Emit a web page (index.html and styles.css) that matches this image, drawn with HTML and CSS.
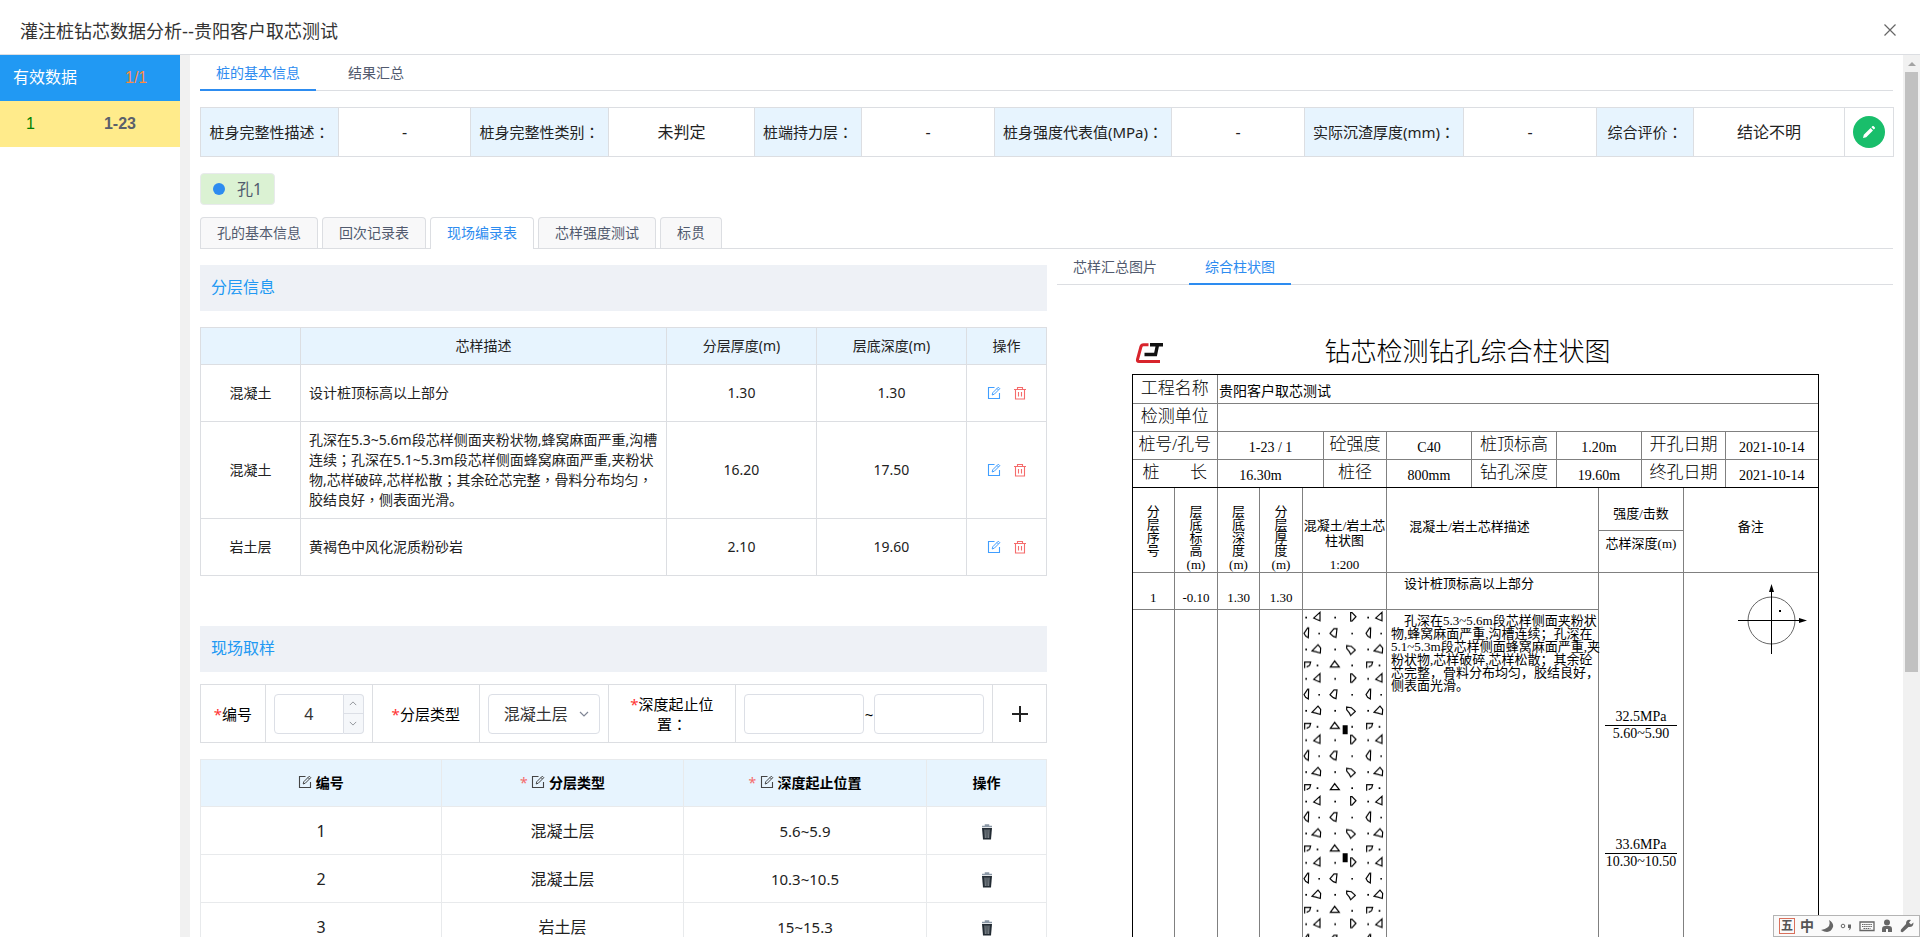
FILE: index.html
```html
<!DOCTYPE html>
<html lang="zh-CN">
<head>
  <meta charset="UTF-8">
  <meta name="viewport" content="width=device-width, initial-scale=1.0">
  <title>灌注桩钻芯数据分析</title>
  <link rel="stylesheet" href="styles.css">
</head>
<body>
  <!-- Shared icons -->
  <svg class="sprite" aria-hidden="true">
    <symbol id="i-edit" viewBox="0 0 14 14">
      <path d="M7.5 1.5H1.5v11h11V7" fill="none" stroke="currentColor" stroke-width="1.1"/>
      <path d="M5.2 9l.6-2.3L11.3 1.2l1.5 1.5-5.500 5.500zM10 2.500l1.500 1.500" fill="none" stroke="currentColor" stroke-width="1"/>
    </symbol>
    <symbol id="i-delete" viewBox="0 0 14 14">
      <path d="M1 3.500h12M4.500 3.500v-2h5v2M2.500 3.500v9.500h9V3.500M5.500 6v4.500M8.500 6v4.500" fill="none" stroke="currentColor" stroke-width="1.1"/>
    </symbol>
    <symbol id="i-trash" viewBox="0 0 12 16">
      <path d="M1 2.500h10M4.500 2V1h3v1" fill="none" stroke="#8a97a5" stroke-width="1.500"/>
      <path d="M1 4h10l-1 11.500H2z" fill="#222b33"/>
      <path d="M4 5.500l.3 8.500M6 5.500V14M8 5.500L7.700 14" stroke="#a9b0b5" stroke-width=".8"/>
    </symbol>
    <symbol id="i-up" viewBox="0 0 10 6"><path d="M1 5l4-4 4 4" fill="none" stroke="currentColor" stroke-width="1.2"/></symbol>
    <symbol id="i-down" viewBox="0 0 10 6"><path d="M1 1l4 4 4-4" fill="none" stroke="currentColor" stroke-width="1.2"/></symbol>
  </svg>

  <header class="header">
    <h1>灌注桩钻芯数据分析--贵阳客户取芯测试</h1>
    <button class="close" aria-label="关闭">
      <svg width="12" height="12" viewBox="0 0 12 12"><path d="M.5.5l11 11M11.500.5l-11 11" stroke="#666" stroke-width="1.2"/></svg>
    </button>
  </header>

  <div class="layout">
    <aside class="sidebar">
      <div class="side-head"><span>有效数据</span><span class="count">1/1</span></div>
      <div class="side-item"><span class="idx">1</span><span class="name">1-23</span></div>
    </aside>

    <main class="main">
      <nav class="tabs">
        <button class="tab active">桩的基本信息</button>
        <button class="tab">结果汇总</button>
      </nav>

      <table class="summary">
        <colgroup>
          <col style="width:138px"><col style="width:132px"><col style="width:138px"><col style="width:146px">
          <col style="width:107px"><col style="width:133px"><col style="width:177px"><col style="width:133px">
          <col style="width:159px"><col style="width:133px"><col style="width:97px"><col style="width:151px">
          <col style="width:49px">
        </colgroup>
        <tr>
          <th>桩身完整性描述<span class="mid" lang="zh-TW">：</span></th><td>-</td>
          <th>桩身完整性类别<span class="mid" lang="zh-TW">：</span></th><td>未判定</td>
          <th>桩端持力层<span class="mid" lang="zh-TW">：</span></th><td>-</td>
          <th>桩身强度代表值(MPa)<span class="mid" lang="zh-TW">：</span></th><td>-</td>
          <th>实际沉渣厚度(mm)<span class="mid" lang="zh-TW">：</span></th><td>-</td>
          <th>综合评价<span class="mid" lang="zh-TW">：</span></th><td>结论不明</td>
          <td>
            <button class="round" aria-label="编辑">
              <svg width="14" height="14" viewBox="0 0 14 14"><path d="M1 13l.8-3.200L8.600 3l2.400 2.400-6.800 6.800zM9.400 2.200l1.100-1.100q.5-.4 1 0l1.400 1.400q.4.5 0 1l-1.100 1.100z" fill="#fff"/></svg>
            </button>
          </td>
        </tr>
      </table>

      <button class="hole"><i class="dot"></i>孔1</button>

      <nav class="cards">
        <button class="card">孔的基本信息</button>
        <button class="card">回次记录表</button>
        <button class="card active">现场编录表</button>
        <button class="card">芯样强度测试</button>
        <button class="card">标贯</button>
      </nav>

      <div class="columns">
        <section class="left">
          <h2 class="bar">分层信息</h2>
          <table class="layers">
            <colgroup><col style="width:100px"><col><col style="width:150px"><col style="width:150px"><col style="width:80px"></colgroup>
            <tr class="head"><th></th><th>芯样描述</th><th>分层厚度(m)</th><th>层底深度(m)</th><th>操作</th></tr>
            <tr>
              <td>混凝土</td><td class="desc">设计桩顶标高以上部分</td><td>1.30</td><td>1.30</td>
              <td><div class="ops">
                <button class="blue" aria-label="编辑"><svg><use href="#i-edit"/></svg></button>
                <button class="red" aria-label="删除"><svg><use href="#i-delete"/></svg></button>
              </div></td>
            </tr>
            <tr class="tall">
              <td>混凝土</td>
              <td class="desc">孔深在5.3~5.6m段芯样侧面夹粉状物,蜂窝麻面严重,沟槽连续<span class="mid" lang="zh-TW">；</span>孔深在5.1~5.3m段芯样侧面蜂窝麻面严重,夹粉状物,芯样破碎,芯样松散<span class="mid" lang="zh-TW">；</span>其余砼芯完整<span class="mid" lang="zh-TW">，</span>骨料分布均匀<span class="mid" lang="zh-TW">，</span>胶结良好<span class="mid" lang="zh-TW">，</span>侧表面光滑。</td>
              <td>16.20</td><td>17.50</td>
              <td><div class="ops">
                <button class="blue" aria-label="编辑"><svg><use href="#i-edit"/></svg></button>
                <button class="red" aria-label="删除"><svg><use href="#i-delete"/></svg></button>
              </div></td>
            </tr>
            <tr>
              <td>岩土层</td><td class="desc">黄褐色中风化泥质粉砂岩</td><td>2.10</td><td>19.60</td>
              <td><div class="ops">
                <button class="blue" aria-label="编辑"><svg><use href="#i-edit"/></svg></button>
                <button class="red" aria-label="删除"><svg><use href="#i-delete"/></svg></button>
              </div></td>
            </tr>
          </table>

          <h2 class="bar second">现场取样</h2>
          <form class="sample-form">
            <label class="cell" for="no" style="flex-basis:64px"><span><b>*</b>编号</span></label>
            <div class="cell" style="flex-basis:107px">
              <div class="number">
                <input id="no" type="number" value="4">
                <div class="steps">
                  <button type="button" aria-label="增加"><svg><use href="#i-up"/></svg></button>
                  <button type="button" aria-label="减少"><svg><use href="#i-down"/></svg></button>
                </div>
              </div>
            </div>
            <label class="cell" for="type" style="flex-basis:107px"><span><b>*</b>分层类型</span></label>
            <div class="cell" style="flex-basis:129px">
              <div class="select">
                <select id="type"><option>混凝土层</option><option>岩土层</option></select>
                <svg><use href="#i-down"/></svg>
              </div>
            </div>
            <label class="cell wrap" for="from" style="flex-basis:128px"><span><b>*</b>深度起止位置<i class="mid" lang="zh-TW">：</i></span></label>
            <div class="cell range" style="flex-basis:257px">
              <input id="from" class="from" type="text"><span>~</span><input class="to" type="text" aria-label="终止位置">
            </div>
            <div class="cell" style="flex-basis:54px">
              <button class="add" type="button" aria-label="添加">
                <svg width="16" height="16" viewBox="0 0 16 16"><path d="M8 0v16M0 8h16" stroke="#222" stroke-width="2"/></svg>
              </button>
            </div>
          </form>

          <table class="samples">
            <colgroup><col style="width:241px"><col style="width:242px"><col style="width:243px"><col style="width:120px"></colgroup>
            <tr>
              <th><svg><use href="#i-edit"/></svg> 编号</th>
              <th><b>*</b> <svg><use href="#i-edit"/></svg> 分层类型</th>
              <th><b>*</b> <svg><use href="#i-edit"/></svg> 深度起止位置</th>
              <th>操作</th>
            </tr>
            <tr><td>1</td><td>混凝土层</td><td class="depth">5.6~5.9</td><td><button class="bin" aria-label="删除"><svg><use href="#i-trash"/></svg></button></td></tr>
            <tr><td>2</td><td>混凝土层</td><td class="depth">10.3~10.5</td><td><button class="bin" aria-label="删除"><svg><use href="#i-trash"/></svg></button></td></tr>
            <tr><td>3</td><td>岩土层</td><td class="depth">15~15.3</td><td><button class="bin" aria-label="删除"><svg><use href="#i-trash"/></svg></button></td></tr>
          </table>
        </section>

        <section class="right">
          <nav class="tabs">
            <button class="tab">芯样汇总图片</button>
            <button class="tab active">综合柱状图</button>
          </nav>

          <div class="sheet">
            <div class="sheet-title">
              <svg width="28" height="20" viewBox="0 0 28 20">
                <path d="M13.500 1.700H8.500Q6.500 1.700 6 3.500L2.500 16.500Q2 18.500 4 18.500H25" fill="none" stroke="#d8242c" stroke-width="3"/>
                <path d="M15 1.700H28M22.500 2L20.500 11.500H9.500" fill="none" stroke="#111" stroke-width="3.400"/>
              </svg>
              <h3>钻芯检测钻孔综合柱状图</h3>
            </div>
            <div class="frame">
              <table class="info">
                <colgroup><col style="width:85px"><col style="width:106px"><col style="width:63px"><col style="width:85px"><col style="width:85px"><col style="width:85px"><col style="width:84px"><col></colgroup>
                <tr><th>工程名称</th><td colspan="7" class="project">贵阳客户取芯测试</td></tr>
                <tr><th>检测单位</th><td colspan="7"></td></tr>
                <tr><th>桩号/孔号</th><td>1-23 / 1</td><th>砼强度</th><td>C40</td><th>桩顶标高</th><td>1.20m</td><th>开孔日期</th><td>2021-10-14</td></tr>
                <tr><th><div class="spread"><span>桩</span><span>长</span></div></th><td class="len">16.30m</td><th>桩径</th><td>800mm</td><th>钻孔深度</th><td>19.60m</td><th>终孔日期</th><td>2021-10-14</td></tr>
              </table>
            </div>
            <div class="frame lower-frame">
              <table class="log">
                <colgroup><col style="width:42px"><col style="width:43px"><col style="width:42px"><col style="width:43px"><col style="width:84px"><col style="width:212px"><col style="width:85px"><col></colgroup>
                <tr class="log-head">
                  <th><div class="vert">分层序号</div><div class="unit"></div></th>
                  <th><div class="vert">层底标高</div><div class="unit">(m)</div></th>
                  <th><div class="vert">层底深度</div><div class="unit">(m)</div></th>
                  <th><div class="vert">分层厚度</div><div class="unit">(m)</div></th>
                  <th><div class="pic">混凝土/岩土芯<br>柱状图</div><div class="unit">1:200</div></th>
                  <th class="mark">混凝土/岩土芯样描述</th>
                  <th><div class="hit">强度/击数</div><div class="at">芯样深度(m)</div></th>
                  <th class="note">备注</th>
                </tr>
                <tr class="first">
                  <td>1</td><td>-0.10</td><td>1.30</td><td>1.30</td><td></td><td class="text indent">设计桩顶标高以上部分</td>
                  <td rowspan="2" class="strength">
                    <div class="press"><div>32.5MPa</div><div class="lower">5.60~5.90</div></div>
                    <div class="press"><div>33.6MPa</div><div class="lower">10.30~10.50</div></div>
                  </td>
                  <td rowspan="2" class="compass">
                    <svg width="70" height="70" viewBox="0 0 70 70">
                      <circle cx="33.500" cy="36.500" r="23.500" fill="none" stroke="#666"/>
                      <path d="M33.500 6v64M0 36.500h64" stroke="#000"/>
                      <path d="M33.500 0l2.500 8h-5zM69 36.500l-8 2.500v-5z"/>
                      <rect x="41" y="26" width="2" height="2"/>
                    </svg>
                  </td>
                </tr>
                <tr>
                  <td></td><td></td><td></td><td></td>
                  <td class="core">
                    <svg width="83" height="400" viewBox="0 0 249 1200">
                      <defs>
                        <!-- Concrete aggregate hatch -->
                        <pattern id="agg" width="186" height="184" patternUnits="userSpaceOnUse">
                          <g fill="none" stroke="#000" stroke-width="3.500">
                            <path d="M32 24L51 7V32L41 28zM143 8h4l12 12-12 13h-4zM3 70L14 54h3L16 83 8 78zM81 70L93 56h9l-3 26-8-3zM27 123L45 104l8 10-1 15-14-4zM131 107l14 2 12 11-14 13-4-8-8-10z"/>
                            <path d="M5 174v-18h18l-3 10-9 5M82 171l13-18 14 18z"/>
                          </g>
                          <path d="M7 20h5v5H7zM94 20h5v5h-5zM46 68h5v5h-5zM145 68h5v5h-5zM7 116h5v5H7zM94 116h5v5h-5zM41 164h5v5h-5zM145 164h5v5h-5z"/>
                        </pattern>
                      </defs>
                      <rect width="249" height="1200" fill="url(#agg)"/>
                      <path d="M119 346h15v27h-15zM119 730h15v27h-15z"/>
                    </svg>
                  </td>
                  <td class="text long"><span class="gap"></span>孔深在5.3~5.6m段芯样侧面夹粉状<br>物,蜂窝麻面严重,沟槽连续；孔深在<br>5.1~5.3m段芯样侧面蜂窝麻面严重,夹<br>粉状物,芯样破碎,芯样松散；其余砼<br>芯完整，骨料分布均匀，胶结良好，<br>侧表面光滑。</td>
                </tr>
              </table>
            </div>
          </div>
        </section>
      </div>
    </main>

    <div class="scrollbar"><i class="arrow"></i><i class="thumb"></i></div>
  </div>

  <!-- Input method bar -->
  <div class="ime">
    <span class="wu">五</span>
    <span class="zh">中</span>
    <svg viewBox="0 0 16 16"><path d="M10 2q3 8-8 10 9 5 12-3 1-4-4-7z"/></svg>
    <svg viewBox="0 0 16 16"><circle cx="4" cy="8" r="1.800" fill="none" stroke="#666"/><path d="M9 6.500h3v3q0 2-2.500 3 1-1.500 1-2.500H9z"/></svg>
    <svg viewBox="0 0 16 16"><path d="M1 4h14v8.500H1z" fill="none" stroke="#666" stroke-width="1.300"/><path d="M3 6.500h10M3 8.500h10M4.500 10.500h7" stroke="#666" stroke-dasharray="1.500 .6"/></svg>
    <svg viewBox="0 0 16 16"><circle cx="8" cy="4.500" r="3"/><path d="M3 14v-3q0-3 3-3h4q3 0 3 3v3H9V11H7v3z"/></svg>
    <svg viewBox="0 0 16 16"><path d="M14.500 4.500L12 6.500 10 4.500l2-2.500q-5-1-5 4L2 11.500q-1 2 .5 2.500 1 .5 2-.5L9.500 9q5 .5 5-4.500z"/></svg>
  </div>
</body>
</html>
```

FILE: styles.css
```css
* {
  box-sizing: border-box;
}

body {
  margin: 0;
  height: 100vh;
  display: flex;
  flex-direction: column;
  overflow: hidden;
  background: #fff;
  color: #222;
  font-family: "Noto Sans", "Noto Sans CJK SC", sans-serif;
  font-size: 14px;
  line-height: 20px;
}

button,
input,
select {
  font: inherit;
  color: inherit;
}

button {
  padding: 0;
  border: 0;
  background: none;
  cursor: pointer;
}

h1, h2, h3 {
  margin: 0;
  font-weight: normal;
}

table {
  width: 100%;
  border-collapse: collapse;
  table-layout: fixed;
}

th {
  font-weight: normal;
}

th, td {
  padding: 0;
  text-align: center;
}

i {
  font-style: normal;
}

.sprite {
  display: none;
}

/* Punctuation set in the middle of its square */
.mid {
  font-family: "Noto Sans", "Noto Sans CJK TC", sans-serif;
}

/* Header */
.header {
  flex: none;
  height: 55px;
  padding: 5px 24px 0 20px;
  display: flex;
  align-items: center;
  justify-content: space-between;
  border-bottom: 1px solid #dcdee2;
}

.header h1 {
  padding-top: 4px;
  font-family: "Liberation Sans", "Noto Sans CJK SC", sans-serif;
  font-size: 18px;
  line-height: 24px;
  color: #333;
}

.close svg {
  display: block;
}

.layout {
  flex: 1;
  min-height: 0;
  display: flex;
}

/* Sidebar */
.sidebar {
  flex: none;
  width: 190px;
  border-right: 10px solid #f1f1f1;
  font-family: "Liberation Sans", "Noto Sans CJK SC", sans-serif;
  font-size: 16px;
}

.side-head,
.side-item {
  height: 46px;
  display: flex;
  align-items: center;
}

.side-head {
  padding-left: 13px;
  gap: 48px;
  background: #2199f3;
  color: #fff;
}

.count {
  color: #ff8a3c;
}

.side-item {
  padding-left: 26px;
  gap: 69px;
  background: #ffeb8b;
}

.idx {
  color: green;
}

.name {
  font-weight: bold;
  color: #5a5f6b;
}

.main {
  flex: 1;
  min-width: 0;
  padding: 0 10px;
  overflow: hidden;
}

/* Line tabs */
.tabs {
  height: 36px;
  display: flex;
  gap: 16px;
  border-bottom: 1px solid #dcdee2;
}

.tab {
  height: 36px;
  padding: 2px 16px 0;
  color: #515a6e;
  border-bottom: 2px solid transparent;
}

.tab.active {
  color: #2d8cf0;
  border-bottom-color: #2d8cf0;
}

/* Summary row */
.summary {
  margin-top: 16px;
  font-size: 16px;
}

.summary tr {
  height: 49px;
}

.summary th,
.summary td {
  border: 1px solid #dcdee2;
  white-space: nowrap;
}

.summary th {
  background: #e7f4fe;
  font-size: 15px;
}

.round {
  width: 32px;
  height: 32px;
  border-radius: 50%;
  background: #19be6b;
  vertical-align: middle;
}

.round svg {
  display: block;
  margin: 0 auto;
}

.hole {
  margin: 16px 0 12px;
  height: 32px;
  padding: 0 12px;
  display: flex;
  align-items: center;
  gap: 12px;
  border: 1px solid #e8eaec;
  border-radius: 4px;
  background: #dbf2d3;
  color: #515a6e;
  font-size: 16px;
}

.dot {
  width: 12px;
  height: 12px;
  border-radius: 50%;
  background: #2d8cf0;
}

/* Card tabs */
.cards {
  height: 32px;
  display: flex;
  gap: 4px;
  border-bottom: 1px solid #dcdee2;
}

.card {
  height: 31px;
  padding: 0 16px;
  border: 1px solid #dcdee2;
  border-bottom: 0;
  border-radius: 4px 4px 0 0;
  background: #f8f8f9;
  color: #515a6e;
}

.card.active {
  height: 32px;
  padding-bottom: 2px;
  background: #fff;
  color: #2d8cf0;
}

.columns {
  display: flex;
  align-items: flex-start;
  gap: 10px;
}

.left {
  flex: 0 0 50%;
  padding-top: 16px;
}

.right {
  flex: 1;
  min-width: 0;
}

.bar {
  height: 46px;
  padding-left: 11px;
  margin-bottom: 16px;
  background: #eef1f6;
  color: #2199f3;
  font-size: 16px;
  line-height: 44px;
}

.bar.second {
  margin: 50px 0 12px;
}

/* Layer table */
.layers tr {
  height: 57px;
}

.layers .head {
  height: 37px;
}

.layers .tall {
  height: 97px;
}

.layers th,
.layers td {
  border: 1px solid #dcdee2;
}

.layers th {
  background: #e7f4fe;
}

.layers .desc {
  padding: 0 8px;
  text-align: left;
}

.ops {
  display: flex;
  justify-content: center;
  gap: 12px;
}

.ops svg {
  display: block;
  width: 14px;
  height: 14px;
}

.blue {
  color: #409eff;
}

.red {
  color: #f56c6c;
}

/* Sample form */
.sample-form {
  height: 59px;
  display: flex;
  border: 1px solid #dcdee2;
  margin-bottom: 16px;
  color: #000;
  font-size: 15px;
}

.cell {
  flex: 1 1 auto;
  min-width: 0;
  padding: 0 8px;
  display: flex;
  align-items: center;
  justify-content: center;
  text-align: center;
  border-left: 1px solid #dcdee2;
}

.cell:first-child {
  border-left: 0;
}

.cell.wrap {
  padding: 0 20px;
}

.cell b,
.samples b {
  font-weight: normal;
  color: #f33;
}

.sample-form input,
.sample-form select {
  min-width: 0;
  width: 100%;
  height: 40px;
  border: 1px solid #dcdfe6;
  border-radius: 4px;
  background: #fff;
  color: #333;
  font-size: 16px;
}

.number {
  flex: 1;
  display: flex;
}

.sample-form .number input {
  flex: 1;
  border-radius: 4px 0 0 4px;
  text-align: center;
  appearance: textfield;
}

.number input::-webkit-inner-spin-button {
  appearance: none;
  margin: 0;
}

.steps {
  flex: none;
  width: 20px;
  display: flex;
  flex-direction: column;
  border: 1px solid #dcdfe6;
  border-left: 0;
  border-radius: 0 4px 4px 0;
  background: #f5f7fa;
}

.steps button {
  flex: 1;
  color: #909399;
}

.steps button + button {
  border-top: 1px solid #dcdfe6;
}

.steps svg,
.select svg {
  display: block;
  width: 8px;
  height: 5px;
  margin: 0 auto;
}

.select {
  flex: 1;
  position: relative;
  color: #808695;
}

.select select {
  padding: 0 15px;
  appearance: none;
}

/* Chevron over the drop-down */
.select svg {
  position: absolute;
  right: 11px;
  top: 17px;
  width: 10px;
  height: 6px;
  pointer-events: none;
}

.range .from {
  flex: 12;
}

.range .to {
  flex: 11;
}

.range span {
  flex: none;
  width: 10px;
}

.add svg {
  display: block;
}

/* Sample table */
.samples {
  font-size: 16px;
}

.samples tr {
  height: 48px;
}

.samples th,
.samples td {
  border: 1px solid #e8eaec;
}

.samples tr:first-child {
  height: 47px;
}

.samples th {
  background: #e7f4fe;
  color: #000;
  font-size: 14px;
  font-weight: bold;
}

.samples b {
  color: #f56c6c;
}

.samples svg {
  width: 14px;
  height: 14px;
  vertical-align: -1px;
  color: #444;
}

.samples .depth {
  font-size: 15px;
}

.bin {
  vertical-align: middle;
}

.samples .bin svg {
  display: block;
  width: 12px;
  height: 16px;
}

/* Column sheet */
.sheet {
  width: 687px;
  max-width: 100%;
  margin: 47px auto 0;
  color: #000;
  font-family: "Liberation Serif", "Noto Sans CJK SC", serif;
}

.sheet-title {
  height: 42px;
  padding: 0 46px 0 3px;
  display: flex;
  align-items: center;
}

.sheet-title h3 {
  flex: 1;
  text-align: center;
  font-size: 26px;
  line-height: 40px;
  font-weight: 300;
}

.frame {
  border: 1px solid #000;
}

.lower-frame {
  border-top: 0;
}

.info,
.log {
  border-style: hidden;
}

.info td,
.info th,
.log td,
.log th {
  border: 1px solid #808080;
}

.info tr {
  height: 28px;
}

.info th {
  font-size: 17px;
  font-weight: 300;
}

.info td {
  padding-top: 6px;
  font-size: 14px;
}

.info .project {
  padding-left: 1px;
  text-align: left;
}

.info .len {
  padding-right: 20px;
}

.spread {
  display: flex;
  justify-content: space-between;
  padding: 0 10px;
}

.log {
  font-size: 13px;
  line-height: 13px;
}

.log-head {
  height: 84px;
}

.log-head th {
  vertical-align: bottom;
}

.log-head .mark,
.log-head .note {
  vertical-align: middle;
}

.log-head .mark {
  padding: 0 46px 6px 0;
  white-space: nowrap;
}

.log-head .note {
  padding-bottom: 6px;
}

.vert {
  width: 13px;
  margin: 0 auto;
  word-break: break-all;
}

.unit {
  height: 15px;
  line-height: 16px;
}

.pic {
  height: 39px;
  line-height: 15px;
  white-space: nowrap;
}

.hit {
  height: 42px;
  padding-top: 8px;
  line-height: 34px;
  border-bottom: 1px solid #808080;
}

.at {
  height: 41px;
  line-height: 26px;
}

.first {
  height: 37px;
}

.first td {
  padding-top: 14px;
}

.log .text {
  padding: 4px 0 0 4px;
  vertical-align: top;
  text-align: left;
  white-space: nowrap;
}

.log .indent {
  padding-left: 17px;
}

.gap {
  display: inline-block;
  width: 13px;
}

.log .core {
  padding: 0;
  vertical-align: top;
}

.core svg {
  display: block;
}

.log .strength {
  padding: 136px 6px 0;
  vertical-align: top;
  font-size: 14px;
}

.press {
  margin-bottom: 96px;
  line-height: 16px;
}

.lower {
  border-top: 1px solid #000;
  line-height: 15px;
}

.log .compass {
  padding: 11px 0 0 54px;
  vertical-align: top;
  text-align: left;
}

/* Scrollbar */
.scrollbar {
  flex: none;
  width: 17px;
  display: flex;
  flex-direction: column;
  align-items: center;
  background: #f1f1f1;
}

.arrow {
  margin: 7px 0 6px;
  border: 4px solid transparent;
  border-top: 0;
  border-bottom-color: #a3a3a3;
}

.thumb {
  width: 13px;
  height: 68%;
  background: #c1c1c1;
}

/* Input method bar */
.ime {
  position: fixed;
  right: 0;
  bottom: 0;
  height: 22px;
  padding: 0 4px 0 5px;
  display: flex;
  align-items: center;
  gap: 4px;
  border: 1px solid #b4b4b4;
  background: #fafafa;
  color: #555;
}

.ime span,
.ime svg {
  width: 16px;
  height: 16px;
  fill: #666;
}

.wu {
  border: 1px solid #d9705c;
  font-size: 12px;
  line-height: 13px;
  text-align: center;
  font-weight: bold;
}

.zh {
  font-size: 14px;
  line-height: 15px;
  text-align: center;
  font-weight: bold;
}
```
